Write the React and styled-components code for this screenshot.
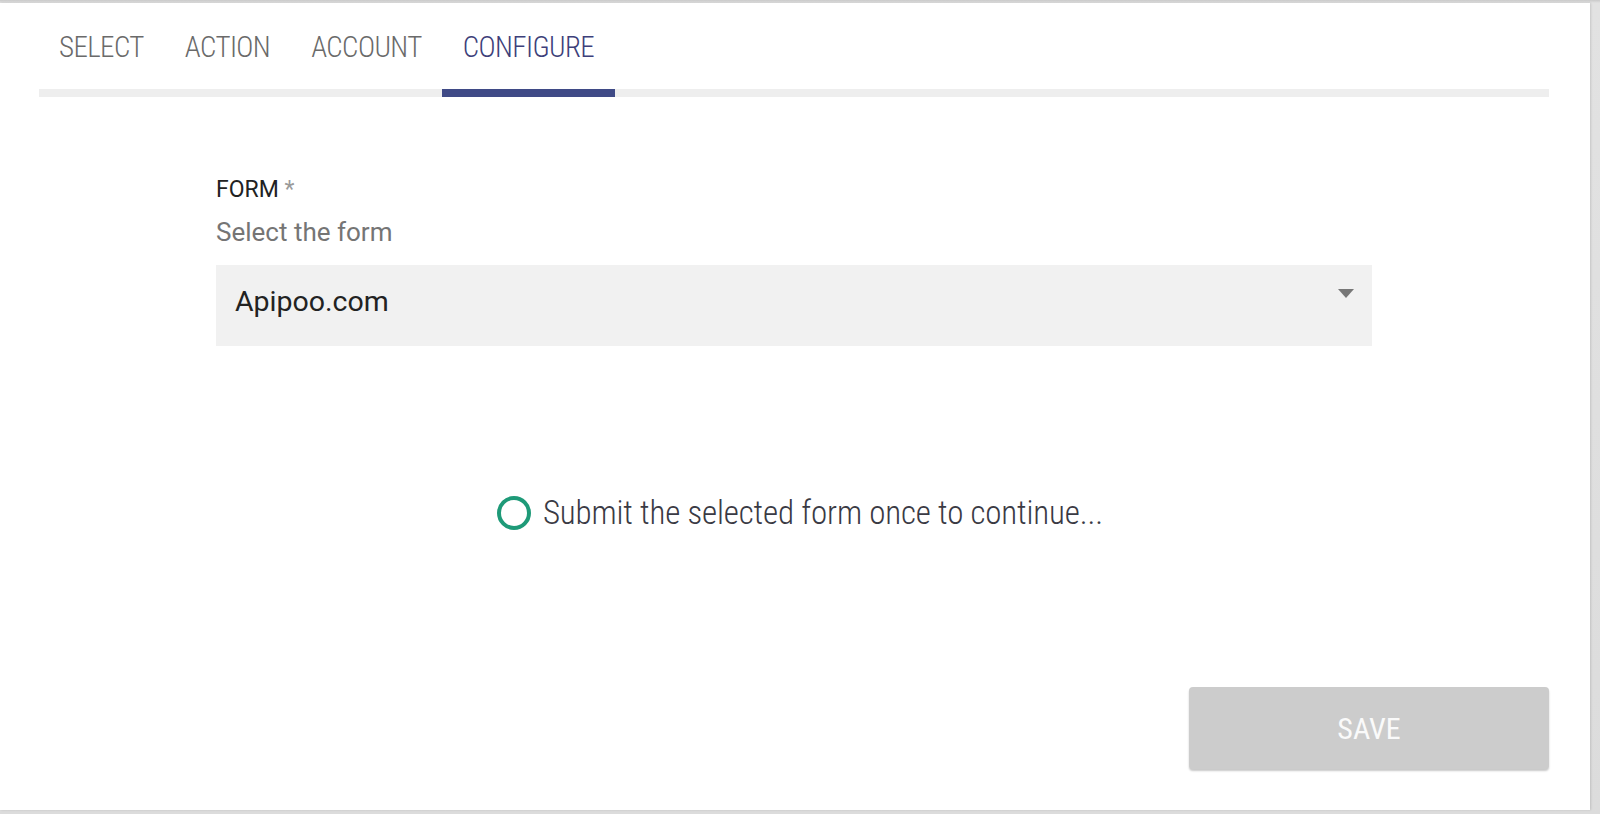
import React from "react";
import styled, { createGlobalStyle } from "styled-components";

const GlobalStyle = createGlobalStyle`
  html, body {
    margin: 0;
    padding: 0;
    background: #dadada;
    font-family: Roboto, "Liberation Sans", sans-serif;
  }
  * { box-sizing: border-box; }
`;

const Frame = styled.div`
  width: 1600px;
  height: 814px;
  padding: 3px 10px 4px 0;
  background: linear-gradient(to bottom, #c9c9c9 0, #e2e2e2 3px, #dcdcdc 100%);
`;

const Panel = styled.div`
  height: 807px;
  background: #ffffff;
  display: flex;
  flex-direction: column;
  padding: 0 41px 0 39px;
  box-shadow: 1px 0 2px rgba(0, 0, 0, 0.12);
`;

const TabBar = styled.nav`
  display: flex;
  border-bottom: 8px solid #eeeeee;
`;

const Tab = styled.div`
  padding: 27px 20.5px 24px;
  margin-bottom: -8px;
  border-bottom: 8px solid ${(p) => (p.$active ? "#3f4a86" : "transparent")};
  font-size: 29px;
  line-height: 35px;
  font-weight: 300;
  font-stretch: 87.5%;
  letter-spacing: -0.6px;
  color: ${(p) => (p.$active ? "#3d3f7a" : "#6a6a6a")};
  white-space: nowrap;
  &:first-child {
    padding-left: 20px;
  }
`;

const Form = styled.section`
  width: 1156px;
  margin: 79px auto 0;
  display: flex;
  flex-direction: column;
`;

const Label = styled.div`
  font-size: 23px;
  line-height: 28px;
  font-weight: 400;
  color: #222222;
`;

const Required = styled.span`
  color: #9a9a9a;
`;

const Help = styled.div`
  margin-top: 13px;
  font-size: 26px;
  line-height: 30px;
  color: #757575;
`;

const SelectBox = styled.div`
  margin-top: 18px;
  height: 81px;
  background: #f1f1f1;
  display: flex;
  justify-content: space-between;
  align-items: flex-start;
  padding: 20px 18px 0 19px;
`;

const SelectValue = styled.span`
  font-size: 28.5px;
  line-height: 34px;
  color: #222222;
`;

const Caret = styled.span`
  margin-top: 4px;
  width: 0;
  height: 0;
  border-left: 8.5px solid transparent;
  border-right: 8.5px solid transparent;
  border-top: 9px solid #777777;
`;

const Status = styled.div`
  margin-top: 147px;
  padding-left: 12px;
  display: flex;
  justify-content: center;
  align-items: center;
  gap: 12px;
`;

const StatusText = styled.span`
  font-size: 33px;
  line-height: 40px;
  font-weight: 300;
  font-stretch: 87.5%;
  letter-spacing: -0.15px;
  color: #3a3a44;
`;

const Footer = styled.div`
  margin-top: auto;
  padding-bottom: 41px;
  display: flex;
  justify-content: flex-end;
`;

const SaveButton = styled.button`
  width: 360px;
  height: 82px;
  border: none;
  border-radius: 4px;
  background: #cccccc;
  box-shadow: 0 2px 2px rgba(0, 0, 0, 0.22);
  color: #fafafa;
  font-family: Roboto, "Liberation Sans", sans-serif;
  font-size: 30px;
  font-weight: 400;
  font-stretch: 87.5%;
  cursor: default;
`;

const Ring = () => (
  <svg width="34" height="34" viewBox="0 0 34 34">
    <circle cx="17" cy="17" r="15" fill="none" stroke="#1e9a78" strokeWidth="4" />
  </svg>
);

const tabs = ["SELECT", "ACTION", "ACCOUNT", "CONFIGURE"];

export default function App() {
  return (
    <>
      <GlobalStyle />
      <Frame>
        <Panel>
          <TabBar>
            {tabs.map((t) => (
              <Tab key={t} $active={t === "CONFIGURE"}>
                {t}
              </Tab>
            ))}
          </TabBar>
          <Form>
            <Label>
              FORM <Required>*</Required>
            </Label>
            <Help>Select the form</Help>
            <SelectBox>
              <SelectValue>Apipoo.com</SelectValue>
              <Caret />
            </SelectBox>
          </Form>
          <Status>
            <Ring />
            <StatusText>Submit the selected form once to continue...</StatusText>
          </Status>
          <Footer>
            <SaveButton>SAVE</SaveButton>
          </Footer>
        </Panel>
      </Frame>
    </>
  );
}
